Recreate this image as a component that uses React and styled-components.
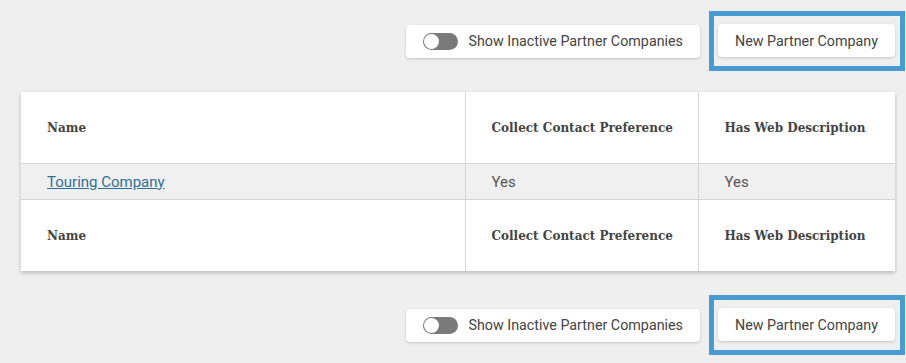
import React, { useState } from 'react';
import styled, { createGlobalStyle } from 'styled-components';

const GlobalStyle = createGlobalStyle`
  html, body {
    margin: 0;
    padding: 0;
    background: #efefef;
    font-family: Roboto, "Liberation Sans", sans-serif;
    color: #444;
  }
`;

const Page = styled.div`
  padding: 11px 11px 0 21px;
  width: 906px;
  box-sizing: border-box;
`;

const Toolbar = styled.div`
  display: flex;
  justify-content: flex-end;
  align-items: center;
  gap: 9px;
  margin-right: -10px;
  margin-bottom: ${({ $gap }) => $gap || 0}px;
`;

const Highlight = styled.div`
  border: 5px solid #4a9bd2;
  padding: 8px 5px 9px 4px;
  display: flex;
`;

const Button = styled.button`
  display: flex;
  align-items: center;
  gap: 10px;
  height: 33px;
  padding: 0 17px;
  background: #fff;
  border: none;
  border-radius: 4px;
  box-shadow: 0 1px 3px rgba(0, 0, 0, 0.18);
  font-family: Roboto, "Liberation Sans", sans-serif;
  font-size: 14.3px;
  color: #444;
  white-space: nowrap;
  cursor: pointer;
`;

const Track = styled.span`
  position: relative;
  width: 35px;
  height: 17px;
  border-radius: 9px;
  background: ${({ $on }) => ($on ? '#4a9bd2' : '#7a7a7a')};
  flex-shrink: 0;
`;

const Knob = styled.span`
  position: absolute;
  top: 1px;
  left: ${({ $on }) => ($on ? '19px' : '1px')};
  width: 15px;
  height: 15px;
  border-radius: 50%;
  background: #fff;
`;

const Table = styled.table`
  width: 100%;
  table-layout: fixed;
  border-collapse: collapse;
  background: #fff;
  box-shadow: 0 2px 4px rgba(0, 0, 0, 0.22);
  margin-bottom: 24px;
`;

const Th = styled.th`
  height: 71px;
  padding: 0 0 0 26px;
  text-align: left;
  white-space: nowrap;
  font-family: "DejaVu Serif", serif;
  font-weight: bold;
  font-size: 12px;
  color: #444;
  border-left: 1px solid #d6d6d6;
  border-top: ${({ $foot }) => ($foot ? '1px solid #d6d6d6' : 'none')};
  border-bottom: ${({ $foot }) => ($foot ? 'none' : '1px solid #d6d6d6')};
  &:first-child { border-left: none; }
`;

const Row = styled.tr`
  background: #f0f0f0;
`;

const Td = styled.td`
  height: 35px;
  padding: 0 0 0 26px;
  font-size: 15px;
  color: #555;
  border-left: 1px solid #d6d6d6;
  &:first-child { border-left: none; }
`;

const Link = styled.a`
  color: #2f7099;
  text-decoration: underline;
`;

function Actions({ gap }) {
  const [on, setOn] = useState(false);
  return (
    <Toolbar $gap={gap}>
      <Button onClick={() => setOn(!on)}>
        <Track $on={on}><Knob $on={on} /></Track>
        Show Inactive Partner Companies
      </Button>
      <Highlight>
        <Button>New Partner Company</Button>
      </Highlight>
    </Toolbar>
  );
}

const columns = ['Name', 'Collect Contact Preference', 'Has Web Description'];
const rows = [{ name: 'Touring Company', contact: 'Yes', web: 'Yes' }];

export default function App() {
  return (
    <Page>
      <GlobalStyle />
      <Actions gap={21} />
      <Table>
        <colgroup>
          <col style={{ width: 444 }} />
          <col style={{ width: 233 }} />
          <col style={{ width: 197 }} />
        </colgroup>
        <thead>
          <tr>{columns.map((c) => <Th key={c}>{c}</Th>)}</tr>
        </thead>
        <tbody>
          {rows.map((r) => (
            <Row key={r.name}>
              <Td><Link href="#">{r.name}</Link></Td>
              <Td>{r.contact}</Td>
              <Td>{r.web}</Td>
            </Row>
          ))}
        </tbody>
        <tfoot>
          <tr>{columns.map((c) => <Th key={c} $foot>{c}</Th>)}</tr>
        </tfoot>
      </Table>
      <Actions />
    </Page>
  );
}
